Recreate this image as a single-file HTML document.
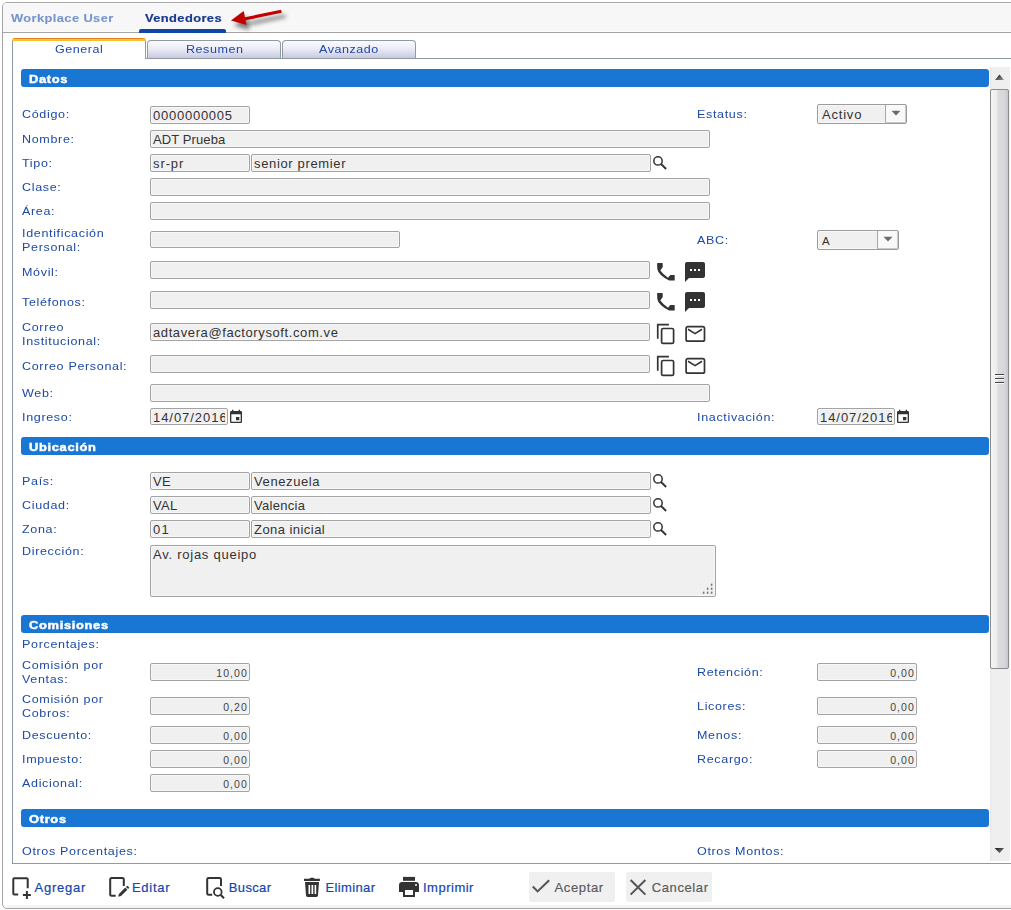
<!DOCTYPE html>
<html><head><meta charset="utf-8"><style>
html,body{margin:0;padding:0;background:#fff;width:1011px;height:910px;overflow:hidden;position:relative;font-family:'Liberation Sans', sans-serif}
.t{position:absolute;white-space:nowrap;font-family:'Liberation Sans', sans-serif}
svg{position:absolute;overflow:visible}
</style></head><body>

<div style="position:absolute;left:2px;top:2px;width:1100px;height:907px;box-sizing:border-box;border:1px solid #a5a5a5;border-radius:5px;background:#fff"></div>
<div style="position:absolute;left:3px;top:3px;width:1100px;height:29px;background:#f7f7f7;border-top-left-radius:4px"></div>
<div style="position:absolute;left:3px;top:32px;width:1009px;height:1px;box-sizing:border-box;background:#a5a5a5"></div>
<div style="position:absolute;left:6px;top:3px;width:1006px;height:1px;box-sizing:border-box;background:#fdfdfd"></div>
<div style="position:absolute;left:3px;top:31px;width:1009px;height:1px;box-sizing:border-box;background:#fcfcfc"></div>
<div style="position:absolute;left:7px;top:905px;width:1005px;height:3px;box-sizing:border-box;background:#f1f3f6"></div>
<div class="t" style="left:10.50px;top:11.30px;font-size:11.5px;line-height:14px;letter-spacing:0.35px;color:#7595cc;font-weight:bold;transform:scaleX(1.12);transform-origin:0 0;-webkit-text-stroke:0.1px #7595cc">Workplace User</div>
<div class="t" style="left:144.50px;top:11.30px;font-size:11.5px;line-height:14px;letter-spacing:0.35px;color:#17398f;font-weight:bold;transform:scaleX(1.12);transform-origin:0 0;-webkit-text-stroke:0.2px #17398f">Vendedores</div>
<div style="position:absolute;left:139px;top:29px;width:87px;height:4px;background:#0c47a6;border-radius:2px 2px 0 0"></div>
<svg style="left:0;top:0" width="300" height="40"><defs><filter id="sh" x="-30%" y="-80%" width="160%" height="260%"><feGaussianBlur stdDeviation="2.2"/></filter></defs><g transform="translate(3,5)" opacity="0.5" filter="url(#sh)"><path d="M281.4 11.3 L243 19.2" stroke="#000" stroke-width="3.2" stroke-linecap="round"/><path d="M230.9 20.4 L243.7 11 L246.5 24.9 Z" fill="#000"/></g><path d="M281.4 11.3 L243 19.2" stroke="#c20000" stroke-width="3.2"/><path d="M230.9 20.4 L243.7 11 L246.5 24.9 Z" fill="#c20000"/></svg>
<div style="position:absolute;left:145px;top:58px;width:867px;height:1px;box-sizing:border-box;background:#8f9ba4"></div>
<div style="position:absolute;left:12px;top:41px;width:1px;height:823px;box-sizing:border-box;background:#8f9ba4"></div>
<div style="position:absolute;left:12px;top:863px;width:1000px;height:1px;box-sizing:border-box;background:#8f9ba4"></div>
<div style="position:absolute;left:12px;top:38px;width:134px;height:21px;box-sizing:border-box;border-left:1px solid #8f9ba4;border-right:1px solid #8f9ba4;background:#fff;border-radius:4px 4px 0 0"></div>
<div style="position:absolute;left:12px;top:38px;width:134px;height:3px;background:linear-gradient(#e5841e 0,#e5841e 33%,#fcc634 34%,#fbbd2a 100%);border-radius:4px 4px 0 0"></div>
<div style="position:absolute;left:147px;top:40px;width:134px;height:18px;box-sizing:border-box;border:1px solid #8f9ba4;border-bottom:none;border-radius:4px 4px 0 0;background:linear-gradient(#fafaff 0%,#ececf6 45%,#c9c9e0 100%)"></div>
<div style="position:absolute;left:282px;top:40px;width:134px;height:18px;box-sizing:border-box;border:1px solid #8f9ba4;border-bottom:none;border-radius:4px 4px 0 0;background:linear-gradient(#fafaff 0%,#ececf6 45%,#c9c9e0 100%)"></div>
<div class="t" style="left:55.00px;top:42.20px;font-size:11.5px;line-height:14px;letter-spacing:0.5px;color:#1f4aa8;font-weight:normal;transform:scaleX(1.09);transform-origin:0 0;">General</div>
<div class="t" style="left:186.00px;top:42.20px;font-size:11.5px;line-height:14px;letter-spacing:0.5px;color:#1f4aa8;font-weight:normal;transform:scaleX(1.09);transform-origin:0 0;">Resumen</div>
<div class="t" style="left:319.00px;top:42.20px;font-size:11.5px;line-height:14px;letter-spacing:0.5px;color:#1f4aa8;font-weight:normal;transform:scaleX(1.09);transform-origin:0 0;">Avanzado</div>
<div style="position:absolute;left:990px;top:67px;width:20px;height:794px;box-sizing:border-box;background:linear-gradient(90deg,#e6e6e6 0,#efefef 2px,#efefef 100%)"></div>
<svg style="left:990px;top:67px" width="20" height="22"><defs><linearGradient id="ag" x1="0" y1="0" x2="1" y2="1"><stop offset="0" stop-color="#111"/><stop offset="1" stop-color="#999"/></linearGradient></defs><path d="M5 13 L9.5 7.6 L14 13 Z" fill="url(#ag)"/></svg>
<svg style="left:990px;top:840px" width="20" height="20"><defs><linearGradient id="dg" x1="0" y1="0" x2="1" y2="1"><stop offset="0" stop-color="#111"/><stop offset="1" stop-color="#999"/></linearGradient></defs><path d="M4.7 8 L14 8 L9.5 13.3 Z" fill="url(#dg)"/></svg>
<div style="position:absolute;left:990px;top:89px;width:19px;height:580px;box-sizing:border-box;border:1px solid #8c8c8c;border-radius:2px;background:linear-gradient(90deg,#f6f6f6 0,#ececec 6px,#dcdcdf 7px,#d6d6da 14px,#c6c6cb 17px)"></div>
<div style="position:absolute;left:995px;top:374.1px;width:9px;height:1px;background:#444"></div>
<div style="position:absolute;left:995px;top:375.1px;width:9px;height:1px;background:#fafafa"></div>
<div style="position:absolute;left:995px;top:378.2px;width:9px;height:1px;background:#444"></div>
<div style="position:absolute;left:995px;top:379.2px;width:9px;height:1px;background:#fafafa"></div>
<div style="position:absolute;left:995px;top:382.2px;width:9px;height:1px;background:#444"></div>
<div style="position:absolute;left:995px;top:383.2px;width:9px;height:1px;background:#fafafa"></div>
<div style="position:absolute;left:21px;top:69px;width:968px;height:18px;box-sizing:border-box;background:#1976d2;border-radius:3px"></div>
<div class="t" style="left:29.00px;top:71.60px;font-size:11.5px;line-height:14px;letter-spacing:0.6px;color:#fff;font-weight:bold;transform:scaleX(1.12);transform-origin:0 0;-webkit-text-stroke:0.45px #fff">Datos</div>
<div style="position:absolute;left:21px;top:437px;width:968px;height:18px;box-sizing:border-box;background:#1976d2;border-radius:3px"></div>
<div class="t" style="left:29.00px;top:439.60px;font-size:11.5px;line-height:14px;letter-spacing:0.6px;color:#fff;font-weight:bold;transform:scaleX(1.12);transform-origin:0 0;-webkit-text-stroke:0.45px #fff">Ubicación</div>
<div style="position:absolute;left:21px;top:615px;width:968px;height:18px;box-sizing:border-box;background:#1976d2;border-radius:3px"></div>
<div class="t" style="left:29.00px;top:617.60px;font-size:11.5px;line-height:14px;letter-spacing:0.6px;color:#fff;font-weight:bold;transform:scaleX(1.12);transform-origin:0 0;-webkit-text-stroke:0.45px #fff">Comisiones</div>
<div style="position:absolute;left:21px;top:809px;width:968px;height:18px;box-sizing:border-box;background:#1976d2;border-radius:3px"></div>
<div class="t" style="left:29.00px;top:811.60px;font-size:11.5px;line-height:14px;letter-spacing:0.6px;color:#fff;font-weight:bold;transform:scaleX(1.12);transform-origin:0 0;-webkit-text-stroke:0.45px #fff">Otros</div>
<div class="t" style="left:22.00px;top:107.20px;font-size:11.5px;line-height:14px;letter-spacing:0.6px;color:#1d4aa6;font-weight:normal;transform:scaleX(1.09);transform-origin:0 0;">Código:</div>
<div style="position:absolute;left:150px;top:106px;width:100px;height:18px;box-sizing:border-box;background:#f0f0f0;border:1px solid #a3a3a3;border-radius:2px;box-shadow:inset 0 0 0 1px #f7f7f7"></div>
<div class="t" style="left:151px;top:107px;width:97px;height:16px;overflow:hidden;font-size:13px;line-height:17px;letter-spacing:0.75px;color:#333;padding-left:2px;box-sizing:border-box">0000000005</div>
<div class="t" style="left:697.00px;top:107.00px;font-size:11.5px;line-height:14px;letter-spacing:0.6px;color:#1d4aa6;font-weight:normal;transform:scaleX(1.09);transform-origin:0 0;">Estatus:</div>
<div class="t" style="left:22.00px;top:131.90px;font-size:11.5px;line-height:14px;letter-spacing:0.6px;color:#1d4aa6;font-weight:normal;transform:scaleX(1.09);transform-origin:0 0;">Nombre:</div>
<div style="position:absolute;left:150px;top:130px;width:560px;height:18px;box-sizing:border-box;background:#f0f0f0;border:1px solid #a3a3a3;border-radius:2px;box-shadow:inset 0 0 0 1px #f7f7f7"></div>
<div class="t" style="left:151px;top:131px;width:557px;height:16px;overflow:hidden;font-size:13px;line-height:17px;letter-spacing:0.1px;color:#333;padding-left:2px;box-sizing:border-box">ADT Prueba</div>
<div class="t" style="left:22.00px;top:156.10px;font-size:11.5px;line-height:14px;letter-spacing:0.6px;color:#1d4aa6;font-weight:normal;transform:scaleX(1.09);transform-origin:0 0;">Tipo:</div>
<div style="position:absolute;left:150px;top:154px;width:100px;height:18px;box-sizing:border-box;background:#f0f0f0;border:1px solid #a3a3a3;border-radius:2px;box-shadow:inset 0 0 0 1px #f7f7f7"></div>
<div class="t" style="left:151px;top:155px;width:97px;height:16px;overflow:hidden;font-size:13px;line-height:17px;letter-spacing:0.9px;color:#333;padding-left:2px;box-sizing:border-box">sr-pr</div>
<div style="position:absolute;left:251px;top:154px;width:400px;height:18px;box-sizing:border-box;background:#f0f0f0;border:1px solid #a3a3a3;border-radius:2px;box-shadow:inset 0 0 0 1px #f7f7f7"></div>
<div class="t" style="left:252px;top:155px;width:397px;height:16px;overflow:hidden;font-size:13px;line-height:17px;letter-spacing:0.65px;color:#333;padding-left:2px;box-sizing:border-box">senior premier</div>
<div class="t" style="left:22.00px;top:179.70px;font-size:11.5px;line-height:14px;letter-spacing:0.6px;color:#1d4aa6;font-weight:normal;transform:scaleX(1.09);transform-origin:0 0;">Clase:</div>
<div style="position:absolute;left:150px;top:178px;width:560px;height:18px;box-sizing:border-box;background:#f0f0f0;border:1px solid #a3a3a3;border-radius:2px;box-shadow:inset 0 0 0 1px #f7f7f7"></div>
<div class="t" style="left:22.00px;top:203.90px;font-size:11.5px;line-height:14px;letter-spacing:0.6px;color:#1d4aa6;font-weight:normal;transform:scaleX(1.09);transform-origin:0 0;">Área:</div>
<div style="position:absolute;left:150px;top:202px;width:560px;height:18px;box-sizing:border-box;background:#f0f0f0;border:1px solid #a3a3a3;border-radius:2px;box-shadow:inset 0 0 0 1px #f7f7f7"></div>
<div class="t" style="left:22.00px;top:226.00px;font-size:11.5px;line-height:14px;letter-spacing:0.6px;color:#1d4aa6;font-weight:normal;transform:scaleX(1.09);transform-origin:0 0;">Identificación</div>
<div class="t" style="left:22.00px;top:239.80px;font-size:11.5px;line-height:14px;letter-spacing:0.6px;color:#1d4aa6;font-weight:normal;transform:scaleX(1.09);transform-origin:0 0;">Personal:</div>
<div style="position:absolute;left:150px;top:231px;width:250px;height:17px;box-sizing:border-box;background:#f0f0f0;border:1px solid #a3a3a3;border-radius:2px;box-shadow:inset 0 0 0 1px #f7f7f7"></div>
<div class="t" style="left:697.00px;top:232.70px;font-size:11.5px;line-height:14px;letter-spacing:0.6px;color:#1d4aa6;font-weight:normal;transform:scaleX(1.09);transform-origin:0 0;">ABC:</div>
<div class="t" style="left:22.00px;top:264.80px;font-size:11.5px;line-height:14px;letter-spacing:0.6px;color:#1d4aa6;font-weight:normal;transform:scaleX(1.09);transform-origin:0 0;">Móvil:</div>
<div style="position:absolute;left:150px;top:261px;width:500px;height:18px;box-sizing:border-box;background:#f0f0f0;border:1px solid #a3a3a3;border-radius:2px;box-shadow:inset 0 0 0 1px #f7f7f7"></div>
<div class="t" style="left:22.00px;top:294.80px;font-size:11.5px;line-height:14px;letter-spacing:0.6px;color:#1d4aa6;font-weight:normal;transform:scaleX(1.09);transform-origin:0 0;">Teléfonos:</div>
<div style="position:absolute;left:150px;top:291px;width:500px;height:18px;box-sizing:border-box;background:#f0f0f0;border:1px solid #a3a3a3;border-radius:2px;box-shadow:inset 0 0 0 1px #f7f7f7"></div>
<div class="t" style="left:22.00px;top:319.80px;font-size:11.5px;line-height:14px;letter-spacing:0.6px;color:#1d4aa6;font-weight:normal;transform:scaleX(1.09);transform-origin:0 0;">Correo</div>
<div class="t" style="left:22.00px;top:333.60px;font-size:11.5px;line-height:14px;letter-spacing:0.6px;color:#1d4aa6;font-weight:normal;transform:scaleX(1.09);transform-origin:0 0;">Institucional:</div>
<div style="position:absolute;left:150px;top:323px;width:500px;height:18px;box-sizing:border-box;background:#f0f0f0;border:1px solid #a3a3a3;border-radius:2px;box-shadow:inset 0 0 0 1px #f7f7f7"></div>
<div class="t" style="left:151px;top:324px;width:497px;height:16px;overflow:hidden;font-size:13px;line-height:17px;letter-spacing:0.6px;color:#333;padding-left:2px;box-sizing:border-box">adtavera@factorysoft.com.ve</div>
<div class="t" style="left:22.00px;top:359.00px;font-size:11.5px;line-height:14px;letter-spacing:0.6px;color:#1d4aa6;font-weight:normal;transform:scaleX(1.09);transform-origin:0 0;">Correo Personal:</div>
<div style="position:absolute;left:150px;top:355px;width:500px;height:18px;box-sizing:border-box;background:#f0f0f0;border:1px solid #a3a3a3;border-radius:2px;box-shadow:inset 0 0 0 1px #f7f7f7"></div>
<div class="t" style="left:22.00px;top:385.50px;font-size:11.5px;line-height:14px;letter-spacing:0.6px;color:#1d4aa6;font-weight:normal;transform:scaleX(1.09);transform-origin:0 0;">Web:</div>
<div style="position:absolute;left:150px;top:384px;width:560px;height:18px;box-sizing:border-box;background:#f0f0f0;border:1px solid #a3a3a3;border-radius:2px;box-shadow:inset 0 0 0 1px #f7f7f7"></div>
<div class="t" style="left:22.00px;top:409.60px;font-size:11.5px;line-height:14px;letter-spacing:0.6px;color:#1d4aa6;font-weight:normal;transform:scaleX(1.09);transform-origin:0 0;">Ingreso:</div>
<div style="position:absolute;left:150px;top:408px;width:78px;height:17px;box-sizing:border-box;background:#f0f0f0;border:1px solid #a3a3a3;border-radius:2px;box-shadow:inset 0 0 0 1px #f7f7f7"></div>
<div class="t" style="left:151px;top:409px;width:74px;height:15px;overflow:hidden;font-size:13px;line-height:17px;letter-spacing:0.95px;color:#333;padding-left:2px;box-sizing:border-box">14/07/2016</div>
<div class="t" style="left:697.00px;top:410.20px;font-size:11.5px;line-height:14px;letter-spacing:0.6px;color:#1d4aa6;font-weight:normal;transform:scaleX(1.09);transform-origin:0 0;">Inactivación:</div>
<div style="position:absolute;left:817px;top:408px;width:78px;height:17px;box-sizing:border-box;background:#f0f0f0;border:1px solid #a3a3a3;border-radius:2px;box-shadow:inset 0 0 0 1px #f7f7f7"></div>
<div class="t" style="left:818px;top:409px;width:74px;height:15px;overflow:hidden;font-size:13px;line-height:17px;letter-spacing:0.95px;color:#333;padding-left:2px;box-sizing:border-box">14/07/2016</div>
<div style="position:absolute;left:817px;top:104px;width:90px;height:20px;box-sizing:border-box;background:#f0f0f0;border:1px solid #9c9c9c;border-radius:2px;box-shadow:inset 0 0 0 1px #f8f8f8"></div>
<div style="position:absolute;left:885px;top:105px;width:21px;height:18px;box-sizing:border-box;background:#f9f9f9;border-left:1px solid #a8a8a8;border-right:1px solid #c8c8c8;border-bottom:1px solid #c8c8c8"></div>
<svg style="left:891.0px;top:110.0px" width="10" height="6"><path d="M0.5 0.8 L9.5 0.8 L5 5.6 Z" fill="#6b6b6b"/></svg>
<div class="t" style="left:822px;top:105px;font-size:13px;line-height:20px;color:#333;letter-spacing:0.8px">Activo</div>
<div style="position:absolute;left:817px;top:230px;width:82px;height:20px;box-sizing:border-box;background:#f0f0f0;border:1px solid #9c9c9c;border-radius:2px;box-shadow:inset 0 0 0 1px #f8f8f8"></div>
<div style="position:absolute;left:877px;top:231px;width:21px;height:18px;box-sizing:border-box;background:#f9f9f9;border-left:1px solid #a8a8a8;border-right:1px solid #c8c8c8;border-bottom:1px solid #c8c8c8"></div>
<svg style="left:883.0px;top:236.0px" width="10" height="6"><path d="M0.5 0.8 L9.5 0.8 L5 5.6 Z" fill="#6b6b6b"/></svg>
<div class="t" style="left:822px;top:231px;font-size:11.5px;line-height:20px;color:#333;letter-spacing:0.8px">A</div>
<svg style="left:652px;top:154px" width="16" height="16"><circle cx="6" cy="6.9" r="4.2" fill="none" stroke="#333" stroke-width="1.5"/><line x1="9.1" y1="10" x2="14.1" y2="15" stroke="#333" stroke-width="1.9"/></svg>
<svg style="left:652px;top:472px" width="16" height="16"><circle cx="6" cy="6.9" r="4.2" fill="none" stroke="#333" stroke-width="1.5"/><line x1="9.1" y1="10" x2="14.1" y2="15" stroke="#333" stroke-width="1.9"/></svg>
<svg style="left:652px;top:496px" width="16" height="16"><circle cx="6" cy="6.9" r="4.2" fill="none" stroke="#333" stroke-width="1.5"/><line x1="9.1" y1="10" x2="14.1" y2="15" stroke="#333" stroke-width="1.9"/></svg>
<svg style="left:652px;top:520px" width="16" height="16"><circle cx="6" cy="6.9" r="4.2" fill="none" stroke="#333" stroke-width="1.5"/><line x1="9.1" y1="10" x2="14.1" y2="15" stroke="#333" stroke-width="1.9"/></svg>
<svg style="left:654px;top:260px" width="24" height="24" viewBox="0 0 24 24"><path d="M3.1 3.6 Q3.1 3.1 3.6 3.1 H8.2 Q8.7 3.1 8.7 3.6 V7.1 L6.3 10.6 Q8.65 13.85 14 17.7 L16.3 15.1 H20.2 Q20.7 15.1 20.7 15.6 V20.1 Q20.7 20.6 20.2 20.6 H15.1 Q4 14.45 3.3 8.9 Z" fill="#333"/></svg>
<svg style="left:683px;top:260px" width="24" height="24" viewBox="0 0 24 24"><path d="M20 2H4c-1.1 0-1.99.9-1.99 2L2 22l4-4h14c1.1 0 2-.9 2-2V4c0-1.1-.9-2-2-2zM9 11H7V9h2v2zm4 0h-2V9h2v2zm4 0h-2V9h2v2z" fill="#333"/></svg>
<svg style="left:654px;top:290px" width="24" height="24" viewBox="0 0 24 24"><path d="M3.1 3.6 Q3.1 3.1 3.6 3.1 H8.2 Q8.7 3.1 8.7 3.6 V7.1 L6.3 10.6 Q8.65 13.85 14 17.7 L16.3 15.1 H20.2 Q20.7 15.1 20.7 15.6 V20.1 Q20.7 20.6 20.2 20.6 H15.1 Q4 14.45 3.3 8.9 Z" fill="#333"/></svg>
<svg style="left:683px;top:290px" width="24" height="24" viewBox="0 0 24 24"><path d="M20 2H4c-1.1 0-1.99.9-1.99 2L2 22l4-4h14c1.1 0 2-.9 2-2V4c0-1.1-.9-2-2-2zM9 11H7V9h2v2zm4 0h-2V9h2v2zm4 0h-2V9h2v2z" fill="#333"/></svg>
<svg style="left:655px;top:323px" width="24" height="24"><path d="M2.75 15.8 V1.6 H13.9" fill="none" stroke="#333" stroke-width="1.7"/><rect x="6.6" y="5.5" width="12" height="14.9" rx="1.5" fill="none" stroke="#333" stroke-width="1.7"/></svg>
<svg style="left:685px;top:325px" width="24" height="24"><rect x="1.1" y="1.6" width="18.4" height="14.6" rx="1.8" fill="none" stroke="#333" stroke-width="1.7"/><path d="M3 4.3 L10 8.6 L17 4.3" fill="none" stroke="#333" stroke-width="1.6"/></svg>
<svg style="left:655px;top:355px" width="24" height="24"><path d="M2.75 15.8 V1.6 H13.9" fill="none" stroke="#333" stroke-width="1.7"/><rect x="6.6" y="5.5" width="12" height="14.9" rx="1.5" fill="none" stroke="#333" stroke-width="1.7"/></svg>
<svg style="left:685px;top:357px" width="24" height="24"><rect x="1.1" y="1.6" width="18.4" height="14.6" rx="1.8" fill="none" stroke="#333" stroke-width="1.7"/><path d="M3 4.3 L10 8.6 L17 4.3" fill="none" stroke="#333" stroke-width="1.6"/></svg>
<svg style="left:228px;top:409px" width="16" height="16" viewBox="0 0 24 24"><path d="M17 12h-5v5h5v-5zM16 1v2H8V1H6v2H5c-1.11 0-1.99.9-1.99 2L3 19c0 1.1.89 2 2 2h14c1.1 0 2-.9 2-2V5c0-1.1-.9-2-2-2h-1V1h-2zm3 18H5V8h14v11z" fill="#333"/></svg>
<svg style="left:895px;top:409px" width="16" height="16" viewBox="0 0 24 24"><path d="M17 12h-5v5h5v-5zM16 1v2H8V1H6v2H5c-1.11 0-1.99.9-1.99 2L3 19c0 1.1.89 2 2 2h14c1.1 0 2-.9 2-2V5c0-1.1-.9-2-2-2h-1V1h-2zm3 18H5V8h14v11z" fill="#333"/></svg>
<div class="t" style="left:22.00px;top:473.80px;font-size:11.5px;line-height:14px;letter-spacing:0.6px;color:#1d4aa6;font-weight:normal;transform:scaleX(1.09);transform-origin:0 0;">País:</div>
<div style="position:absolute;left:150px;top:472px;width:100px;height:18px;box-sizing:border-box;background:#f0f0f0;border:1px solid #a3a3a3;border-radius:2px;box-shadow:inset 0 0 0 1px #f7f7f7"></div>
<div class="t" style="left:151px;top:473px;width:97px;height:16px;overflow:hidden;font-size:13px;line-height:17px;letter-spacing:0.3px;color:#333;padding-left:2px;box-sizing:border-box">VE</div>
<div style="position:absolute;left:251px;top:472px;width:400px;height:18px;box-sizing:border-box;background:#f0f0f0;border:1px solid #a3a3a3;border-radius:2px;box-shadow:inset 0 0 0 1px #f7f7f7"></div>
<div class="t" style="left:252px;top:473px;width:397px;height:16px;overflow:hidden;font-size:13px;line-height:17px;letter-spacing:0.6px;color:#333;padding-left:2px;box-sizing:border-box">Venezuela</div>
<div class="t" style="left:22.00px;top:498.10px;font-size:11.5px;line-height:14px;letter-spacing:0.6px;color:#1d4aa6;font-weight:normal;transform:scaleX(1.09);transform-origin:0 0;">Ciudad:</div>
<div style="position:absolute;left:150px;top:496px;width:100px;height:18px;box-sizing:border-box;background:#f0f0f0;border:1px solid #a3a3a3;border-radius:2px;box-shadow:inset 0 0 0 1px #f7f7f7"></div>
<div class="t" style="left:151px;top:497px;width:97px;height:16px;overflow:hidden;font-size:13px;line-height:17px;letter-spacing:0.3px;color:#333;padding-left:2px;box-sizing:border-box">VAL</div>
<div style="position:absolute;left:251px;top:496px;width:400px;height:18px;box-sizing:border-box;background:#f0f0f0;border:1px solid #a3a3a3;border-radius:2px;box-shadow:inset 0 0 0 1px #f7f7f7"></div>
<div class="t" style="left:252px;top:497px;width:397px;height:16px;overflow:hidden;font-size:13px;line-height:17px;letter-spacing:0.3px;color:#333;padding-left:2px;box-sizing:border-box">Valencia</div>
<div class="t" style="left:22.00px;top:522.30px;font-size:11.5px;line-height:14px;letter-spacing:0.6px;color:#1d4aa6;font-weight:normal;transform:scaleX(1.09);transform-origin:0 0;">Zona:</div>
<div style="position:absolute;left:150px;top:520px;width:100px;height:18px;box-sizing:border-box;background:#f0f0f0;border:1px solid #a3a3a3;border-radius:2px;box-shadow:inset 0 0 0 1px #f7f7f7"></div>
<div class="t" style="left:151px;top:521px;width:97px;height:16px;overflow:hidden;font-size:13px;line-height:17px;letter-spacing:1.2px;color:#333;padding-left:2px;box-sizing:border-box">01</div>
<div style="position:absolute;left:251px;top:520px;width:400px;height:18px;box-sizing:border-box;background:#f0f0f0;border:1px solid #a3a3a3;border-radius:2px;box-shadow:inset 0 0 0 1px #f7f7f7"></div>
<div class="t" style="left:252px;top:521px;width:397px;height:16px;overflow:hidden;font-size:13px;line-height:17px;letter-spacing:0.45px;color:#333;padding-left:2px;box-sizing:border-box">Zona inicial</div>
<div class="t" style="left:22.00px;top:544.20px;font-size:11.5px;line-height:14px;letter-spacing:0.6px;color:#1d4aa6;font-weight:normal;transform:scaleX(1.09);transform-origin:0 0;">Dirección:</div>
<div style="position:absolute;left:150px;top:545px;width:566px;height:52px;box-sizing:border-box;background:#f0f0f0;border:1px solid #a3a3a3;border-radius:2px;box-shadow:inset 0 0 0 1px #f7f7f7"></div>
<div class="t" style="left:153px;top:546px;font-size:13px;line-height:18px;letter-spacing:0.75px;color:#333">Av. rojas queipo</div>
<svg style="left:702px;top:583px" width="12" height="12"><rect x="0" y="8" width="1.2" height="1.2" fill="#fff"/><rect x="0.8" y="8.6" width="1.6" height="2.2" fill="#777"/><rect x="4" y="8" width="1.2" height="1.2" fill="#fff"/><rect x="4.8" y="8.6" width="1.6" height="2.2" fill="#777"/><rect x="8" y="8" width="1.2" height="1.2" fill="#fff"/><rect x="8.8" y="8.6" width="1.6" height="2.2" fill="#777"/><rect x="4" y="4" width="1.2" height="1.2" fill="#fff"/><rect x="4.8" y="4.6" width="1.6" height="2.2" fill="#777"/><rect x="8" y="4" width="1.2" height="1.2" fill="#fff"/><rect x="8.8" y="4.6" width="1.6" height="2.2" fill="#777"/><rect x="8" y="0" width="1.2" height="1.2" fill="#fff"/><rect x="8.8" y="0.6" width="1.6" height="2.2" fill="#777"/></svg>
<div class="t" style="left:22.00px;top:636.90px;font-size:11.5px;line-height:14px;letter-spacing:0.6px;color:#1d4aa6;font-weight:normal;transform:scaleX(1.09);transform-origin:0 0;">Porcentajes:</div>
<div class="t" style="left:22.00px;top:658.00px;font-size:11.5px;line-height:14px;letter-spacing:0.6px;color:#1d4aa6;font-weight:normal;transform:scaleX(1.09);transform-origin:0 0;">Comisión por</div>
<div class="t" style="left:22.00px;top:672.00px;font-size:11.5px;line-height:14px;letter-spacing:0.6px;color:#1d4aa6;font-weight:normal;transform:scaleX(1.09);transform-origin:0 0;">Ventas:</div>
<div style="position:absolute;left:150px;top:663px;width:100px;height:18px;box-sizing:border-box;background:#f0f0f0;border:1px solid #a3a3a3;border-radius:2px;box-shadow:inset 0 0 0 1px #f7f7f7"></div>
<div class="t" style="left:150px;width:98px;top:664.5px;font-size:10.5px;line-height:17px;letter-spacing:1.1px;color:#444;text-align:right">10,00</div>
<div class="t" style="left:697.00px;top:664.80px;font-size:11.5px;line-height:14px;letter-spacing:0.6px;color:#1d4aa6;font-weight:normal;transform:scaleX(1.09);transform-origin:0 0;">Retención:</div>
<div style="position:absolute;left:817px;top:663px;width:100px;height:18px;box-sizing:border-box;background:#f0f0f0;border:1px solid #a3a3a3;border-radius:2px;box-shadow:inset 0 0 0 1px #f7f7f7"></div>
<div class="t" style="left:817px;width:98px;top:664.5px;font-size:10.5px;line-height:17px;letter-spacing:1.1px;color:#444;text-align:right">0,00</div>
<div class="t" style="left:22.00px;top:692.00px;font-size:11.5px;line-height:14px;letter-spacing:0.6px;color:#1d4aa6;font-weight:normal;transform:scaleX(1.09);transform-origin:0 0;">Comisión por</div>
<div class="t" style="left:22.00px;top:705.90px;font-size:11.5px;line-height:14px;letter-spacing:0.6px;color:#1d4aa6;font-weight:normal;transform:scaleX(1.09);transform-origin:0 0;">Cobros:</div>
<div style="position:absolute;left:150px;top:697px;width:100px;height:18px;box-sizing:border-box;background:#f0f0f0;border:1px solid #a3a3a3;border-radius:2px;box-shadow:inset 0 0 0 1px #f7f7f7"></div>
<div class="t" style="left:150px;width:98px;top:698.5px;font-size:10.5px;line-height:17px;letter-spacing:1.1px;color:#444;text-align:right">0,20</div>
<div class="t" style="left:697.00px;top:699.00px;font-size:11.5px;line-height:14px;letter-spacing:0.6px;color:#1d4aa6;font-weight:normal;transform:scaleX(1.09);transform-origin:0 0;">Licores:</div>
<div style="position:absolute;left:817px;top:697px;width:100px;height:18px;box-sizing:border-box;background:#f0f0f0;border:1px solid #a3a3a3;border-radius:2px;box-shadow:inset 0 0 0 1px #f7f7f7"></div>
<div class="t" style="left:817px;width:98px;top:698.5px;font-size:10.5px;line-height:17px;letter-spacing:1.1px;color:#444;text-align:right">0,00</div>
<div class="t" style="left:22.00px;top:728.00px;font-size:11.5px;line-height:14px;letter-spacing:0.6px;color:#1d4aa6;font-weight:normal;transform:scaleX(1.09);transform-origin:0 0;">Descuento:</div>
<div style="position:absolute;left:150px;top:726px;width:100px;height:18px;box-sizing:border-box;background:#f0f0f0;border:1px solid #a3a3a3;border-radius:2px;box-shadow:inset 0 0 0 1px #f7f7f7"></div>
<div class="t" style="left:150px;width:98px;top:727.5px;font-size:10.5px;line-height:17px;letter-spacing:1.1px;color:#444;text-align:right">0,00</div>
<div class="t" style="left:697.00px;top:728.20px;font-size:11.5px;line-height:14px;letter-spacing:0.6px;color:#1d4aa6;font-weight:normal;transform:scaleX(1.09);transform-origin:0 0;">Menos:</div>
<div style="position:absolute;left:817px;top:726px;width:100px;height:18px;box-sizing:border-box;background:#f0f0f0;border:1px solid #a3a3a3;border-radius:2px;box-shadow:inset 0 0 0 1px #f7f7f7"></div>
<div class="t" style="left:817px;width:98px;top:727.5px;font-size:10.5px;line-height:17px;letter-spacing:1.1px;color:#444;text-align:right">0,00</div>
<div class="t" style="left:22.00px;top:752.20px;font-size:11.5px;line-height:14px;letter-spacing:0.6px;color:#1d4aa6;font-weight:normal;transform:scaleX(1.09);transform-origin:0 0;">Impuesto:</div>
<div style="position:absolute;left:150px;top:750px;width:100px;height:18px;box-sizing:border-box;background:#f0f0f0;border:1px solid #a3a3a3;border-radius:2px;box-shadow:inset 0 0 0 1px #f7f7f7"></div>
<div class="t" style="left:150px;width:98px;top:751.5px;font-size:10.5px;line-height:17px;letter-spacing:1.1px;color:#444;text-align:right">0,00</div>
<div class="t" style="left:697.00px;top:752.00px;font-size:11.5px;line-height:14px;letter-spacing:0.6px;color:#1d4aa6;font-weight:normal;transform:scaleX(1.09);transform-origin:0 0;">Recargo:</div>
<div style="position:absolute;left:817px;top:750px;width:100px;height:18px;box-sizing:border-box;background:#f0f0f0;border:1px solid #a3a3a3;border-radius:2px;box-shadow:inset 0 0 0 1px #f7f7f7"></div>
<div class="t" style="left:817px;width:98px;top:751.5px;font-size:10.5px;line-height:17px;letter-spacing:1.1px;color:#444;text-align:right">0,00</div>
<div class="t" style="left:22.00px;top:776.00px;font-size:11.5px;line-height:14px;letter-spacing:0.6px;color:#1d4aa6;font-weight:normal;transform:scaleX(1.09);transform-origin:0 0;">Adicional:</div>
<div style="position:absolute;left:150px;top:774px;width:100px;height:18px;box-sizing:border-box;background:#f0f0f0;border:1px solid #a3a3a3;border-radius:2px;box-shadow:inset 0 0 0 1px #f7f7f7"></div>
<div class="t" style="left:150px;width:98px;top:775.5px;font-size:10.5px;line-height:17px;letter-spacing:1.1px;color:#444;text-align:right">0,00</div>
<div class="t" style="left:22.00px;top:843.70px;font-size:11.5px;line-height:14px;letter-spacing:0.6px;color:#1d4aa6;font-weight:normal;transform:scaleX(1.09);transform-origin:0 0;">Otros Porcentajes:</div>
<div class="t" style="left:697.00px;top:843.70px;font-size:11.5px;line-height:14px;letter-spacing:0.6px;color:#1d4aa6;font-weight:normal;transform:scaleX(1.09);transform-origin:0 0;">Otros Montos:</div>
<svg style="left:10px;top:875px" width="24" height="26"><path d="M8.2 19.4 H4.3 Q3.3 19.4 3.3 18.4 V4.2 Q3.3 3.2 4.3 3.2 H16.7 Q17.7 3.2 17.7 4.2 V13.3" fill="none" stroke="#333" stroke-width="2"/><path d="M16.9 16 V24 M12.9 20 H20.9" stroke="#333" stroke-width="2"/></svg>
<div class="t" style="left:34.50px;top:879.70px;font-size:13px;line-height:16px;letter-spacing:0.75px;color:#1446b0;font-weight:normal;-webkit-text-stroke:0.2px #1446b0">Agregar</div>
<svg style="left:107px;top:875px" width="24" height="26"><path d="M8.7 20.7 H4.7 Q3.2 20.7 3.2 19.2 V4.6 Q3.2 3.1 4.7 3.1 H15.3 Q16.8 3.1 16.8 4.6 V11" fill="none" stroke="#333" stroke-width="2"/><path d="M11.2 21.8 L11.9 19 L18.3 12.6 L20.4 14.7 L14 21.1 Z" fill="#333"/><path d="M19 11.9 L19.9 11 Q20.3 10.6 20.7 11 L22 12.3 Q22.4 12.7 22 13.1 L21.1 14 Z" fill="#333"/></svg>
<div class="t" style="left:132.00px;top:879.70px;font-size:13px;line-height:16px;letter-spacing:0.7px;color:#1446b0;font-weight:normal;-webkit-text-stroke:0.2px #1446b0">Editar</div>
<svg style="left:204px;top:875px" width="24" height="26"><path d="M8.2 19.8 H4.6 Q3.2 19.8 3.2 18.4 V4.5 Q3.2 3.1 4.6 3.1 H15.6 Q17 3.1 17 4.5 V11" fill="none" stroke="#333" stroke-width="2"/><circle cx="13.8" cy="17" r="3.85" fill="none" stroke="#333" stroke-width="1.8"/><line x1="16.6" y1="19.8" x2="20" y2="23.3" stroke="#333" stroke-width="2"/></svg>
<div class="t" style="left:228.80px;top:879.70px;font-size:13px;line-height:16px;letter-spacing:0.35px;color:#1446b0;font-weight:normal;-webkit-text-stroke:0.2px #1446b0">Buscar</div>
<svg style="left:300px;top:874px" width="24" height="26"><path d="M4 4.8 H19.9 V7 H4 Z M9.5 4.8 C9.5 3.8 10.3 3.8 12 3.8 C13.7 3.8 14.5 3.8 14.5 4.8 Z" fill="#333"/><path d="M5 8 H19 L18 21.5 C18 22.4 17.3 22.9 16.4 22.9 H7.6 C6.7 22.9 6 22.4 6 21.5 Z" fill="#333"/><rect x="8.5" y="11" width="1.6" height="9" fill="#fff"/><rect x="11.5" y="11" width="1.7" height="9" fill="#fff"/><rect x="14.6" y="11" width="1.6" height="9" fill="#fff"/></svg>
<div class="t" style="left:325.60px;top:879.70px;font-size:13px;line-height:16px;letter-spacing:0.35px;color:#1446b0;font-weight:normal;-webkit-text-stroke:0.2px #1446b0">Eliminar</div>
<svg style="left:397px;top:874px" width="24" height="26"><path d="M6 2.9 H18 V6.8 H6 Z" fill="#333"/><path d="M5 8 H19 C20.7 8 22 9.3 22 11 V18 H18 V23 H6 V18 H2 V11 C2 9.3 3.3 8 5 8 Z M8 16 V21 H16 V16 Z M19 10.1 A1 1 0 1 0 19 12.1 A1 1 0 1 0 19 10.1 Z" fill="#333" fill-rule="evenodd"/></svg>
<div class="t" style="left:423.00px;top:879.70px;font-size:13px;line-height:16px;letter-spacing:0.5px;color:#1446b0;font-weight:normal;-webkit-text-stroke:0.2px #1446b0">Imprimir</div>
<div style="position:absolute;left:529px;top:872px;width:86px;height:30px;box-sizing:border-box;background:#f0f0f0;border-radius:2px"></div>
<div style="position:absolute;left:626px;top:872px;width:86px;height:30px;box-sizing:border-box;background:#f0f0f0;border-radius:2px"></div>
<svg style="left:529px;top:872px" width="24" height="29"><path d="M3.8 14.6 L8.6 19.4 L20.2 8.2" fill="none" stroke="#555" stroke-width="2.1"/></svg>
<div class="t" style="left:554.50px;top:879.70px;font-size:13px;line-height:16px;letter-spacing:0.65px;color:#5c5c5c;font-weight:normal;-webkit-text-stroke:0.2px #5c5c5c">Aceptar</div>
<svg style="left:626px;top:872px" width="24" height="29"><path d="M4.6 8 L19.4 22.6 M19.4 8 L4.6 22.6" fill="none" stroke="#555" stroke-width="2"/></svg>
<div class="t" style="left:651.80px;top:879.70px;font-size:13px;line-height:16px;letter-spacing:0.6px;color:#5c5c5c;font-weight:normal;-webkit-text-stroke:0.2px #5c5c5c">Cancelar</div>
</body></html>
